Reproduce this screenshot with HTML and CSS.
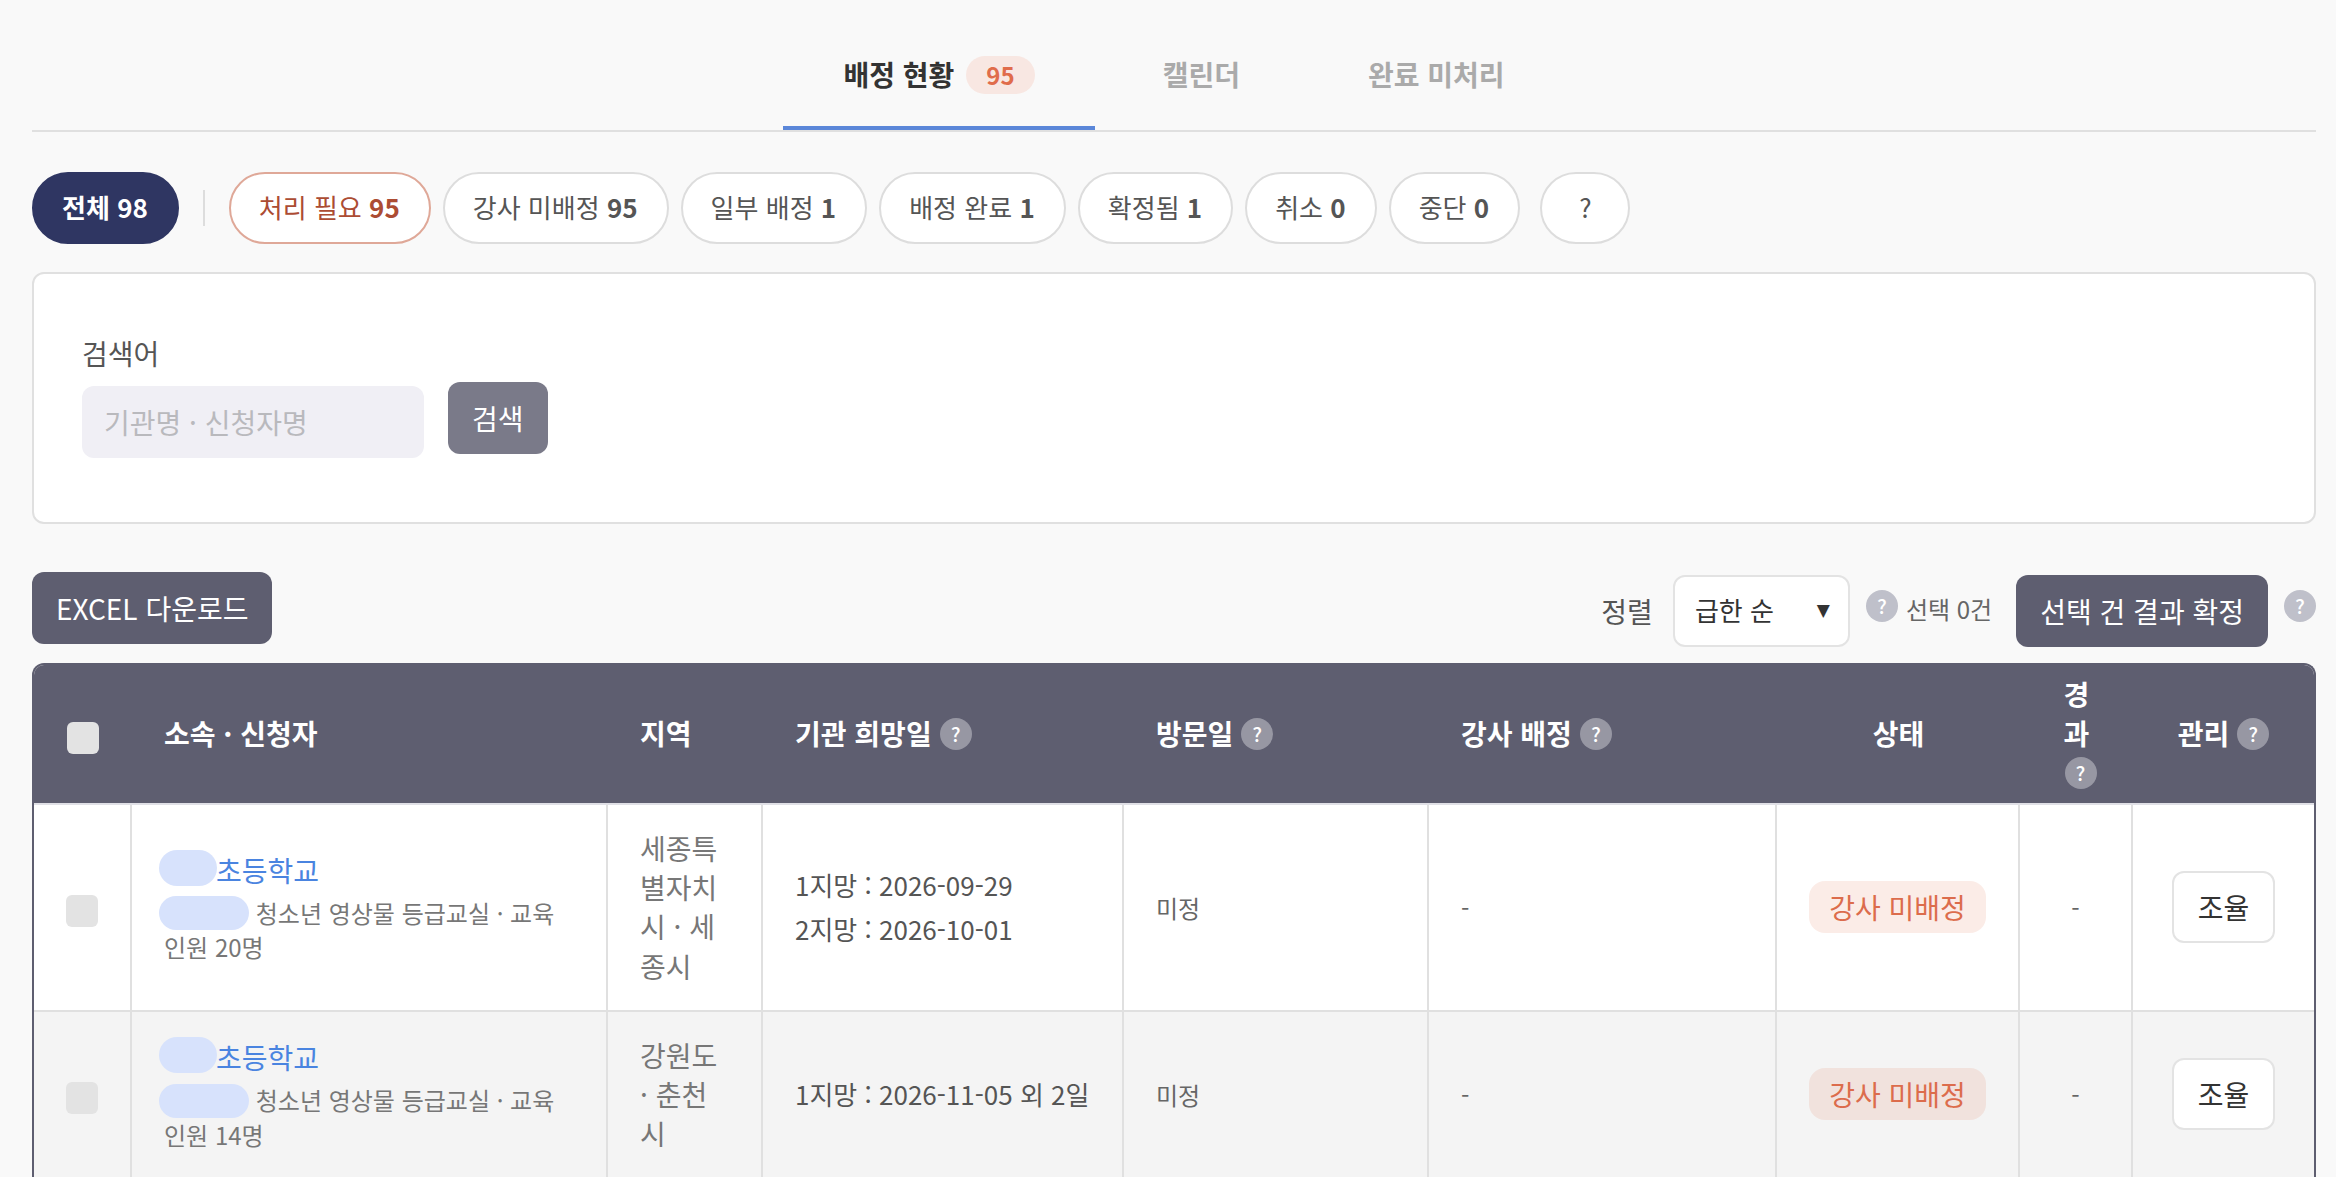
FILE: index.html
```
<!DOCTYPE html>
<html lang="ko">
<head>
  <meta charset="UTF-8">
  <meta name="viewport" content="width=device-width, initial-scale=1.0">
  <title>배정 현황</title>
  <link rel="stylesheet" href="styles.css">
</head>
<body>

  <!-- 탭 -->
  <nav class="tabs">
    <a href="#status" class="tab active">배정 현황 <span class="tab-count">95</span></a>
    <a href="#calendar" class="tab">캘린더</a>
    <a href="#unprocessed" class="tab">완료 미처리</a>
  </nav>

  <main>
    <!-- 상태 필터 -->
    <div class="chips">
      <button type="button" class="chip chip-on">전체 <b>98</b></button>
      <span class="chip-line"></span>
      <button type="button" class="chip chip-alert">처리 필요 <b>95</b></button>
      <button type="button" class="chip">강사 미배정 <b>95</b></button>
      <button type="button" class="chip">일부 배정 <b>1</b></button>
      <button type="button" class="chip">배정 완료 <b>1</b></button>
      <button type="button" class="chip">확정됨 <b>1</b></button>
      <button type="button" class="chip">취소 <b>0</b></button>
      <button type="button" class="chip">중단 <b>0</b></button>
      <button type="button" class="chip chip-help">?</button>
    </div>

    <!-- 검색 -->
    <form class="search">
      <div class="field">
        <label for="keyword">검색어</label>
        <input type="text" id="keyword" placeholder="기관명 · 신청자명">
      </div>
      <button type="submit" class="btn btn-search">검색</button>
    </form>

    <!-- 목록 상단 -->
    <div class="toolbar">
      <button type="button" class="btn">EXCEL 다운로드</button>
      <div class="toolbar-right">
        <label for="sort">정렬</label>
        <div class="select-box">
          <select id="sort">
            <option>급한 순</option>
          </select>
          <span class="arrow">▼</span>
        </div>
        <button type="button" class="help">?</button>
        <span class="selected">선택 0건</span>
        <button type="button" class="btn">선택 건 결과 확정</button>
        <button type="button" class="help">?</button>
      </div>
    </div>

    <!-- 목록 -->
    <div class="table-box">
      <table>
        <colgroup>
          <col class="col-check">
          <col>
          <col class="col-region">
          <col class="col-wish">
          <col class="col-visit">
          <col class="col-teacher">
          <col class="col-state">
          <col class="col-days">
          <col class="col-manage">
        </colgroup>
        <thead>
          <tr>
            <th class="check"><input type="checkbox" aria-label="전체 선택"></th>
            <th>소속 · 신청자</th>
            <th>지역</th>
            <th>기관 희망일<button type="button" class="help">?</button></th>
            <th>방문일<button type="button" class="help">?</button></th>
            <th>강사 배정<button type="button" class="help">?</button></th>
            <th class="center">상태</th>
            <th class="center">경과<button type="button" class="help">?</button></th>
            <th class="center">관리<button type="button" class="help">?</button></th>
          </tr>
        </thead>
        <tbody>
          <tr>
            <td class="check"><input type="checkbox" aria-label="선택"></td>
            <td>
              <a href="#detail" class="name"><span class="mask"></span>초등학교</a>
              <p class="info"><span class="mask mask-wide"></span> 청소년 영상물 등급교실 · 교육인원 20명</p>
            </td>
            <td class="region">세종특별자치시 · 세종시</td>
            <td class="wish">1지망 : 2026-09-29<br>2지망 : 2026-10-01</td>
            <td class="small">미정</td>
            <td class="small">-</td>
            <td class="center"><span class="state">강사 미배정</span></td>
            <td class="center small">-</td>
            <td class="center"><button type="button" class="btn-line">조율</button></td>
          </tr>
          <tr>
            <td class="check"><input type="checkbox" aria-label="선택"></td>
            <td>
              <a href="#detail" class="name"><span class="mask"></span>초등학교</a>
              <p class="info"><span class="mask mask-wide"></span> 청소년 영상물 등급교실 · 교육인원 14명</p>
            </td>
            <td class="region">강원도 · 춘천시</td>
            <td class="wish">1지망 : 2026-11-05 외 2일</td>
            <td class="small">미정</td>
            <td class="small">-</td>
            <td class="center"><span class="state">강사 미배정</span></td>
            <td class="center small">-</td>
            <td class="center"><button type="button" class="btn-line">조율</button></td>
          </tr>
        </tbody>
      </table>
    </div>
  </main>

</body>
</html>
```
FILE: styles.css
```
/* === 기본 === */
* { margin: 0; padding: 0; box-sizing: border-box; font-family: "Noto Sans CJK KR", "Noto Sans", sans-serif; }
body { background-color: #f9f9f9; color: #555; font-size: 28px; line-height: 1.4; padding: 20px 20px 0 32px; }
a { text-decoration: none; }
button { cursor: pointer; border: none; }

/* === 탭 === */
.tabs { display: flex; justify-content: center; gap: 8px; border-bottom: 2px solid #e0e0e0; }
.tab {
  display: flex; align-items: center; gap: 12px; height: 110px;
  padding: 4px 60px 0; border-bottom: 4px solid transparent;
  color: #aaa; font-weight: 700;
}
.tab.active { color: #333; border-bottom-color: #5b87d9; }
.tab-count {
  padding: 2px 20px; border-radius: 20px; background-color: #f8e7e2;
  color: #e06c4b; font-size: 24px; font-weight: 700;
}

/* === 상태 필터 === */
.chips { display: flex; align-items: center; gap: 12px; margin-top: 40px; }
.chip {
  height: 72px; padding: 0 29px 4px 28px; border: 2px solid #ddd; border-radius: 36px;
  background-color: #fff; color: #555; font-size: 26px;
}
.chip b { font-weight: 700; }
.chip-on { background-color: #2f3662; border-color: #2f3662; color: #fff; font-weight: 700; }
.chip-alert { border-color: #dfa898; color: #ac4c33; }
.chip-line { width: 2px; height: 36px; margin: 0 12px; background-color: #ddd; }
.chip-help { margin-left: 8px; padding: 0 37px 4px; }

/* === 검색 === */
.search {
  display: flex; align-items: flex-end; gap: 24px; margin-top: 28px;
  padding: 60px 48px 64px; border: 2px solid #e0e0e0; border-radius: 12px; background-color: #fff;
}
.field { display: flex; flex-direction: column; gap: 13px; }
.field input {
  width: 342px; height: 72px; padding: 0 22px; border: none; border-radius: 12px;
  background-color: #f0eff5; color: #333; font-size: 28px;
}
.field input::placeholder { color: #b9b9bd; }
.btn {
  height: 72px; padding: 0 24px; border-radius: 12px;
  background-color: #5e5e70; color: #fff; font-size: 28px;
}
.btn-search { background-color: #7a7a89; margin-bottom: 4px; }

/* === 목록 상단 === */
.toolbar { display: flex; justify-content: space-between; align-items: flex-start; margin-top: 48px; }
.toolbar-right { display: flex; align-items: center; padding-top: 3px; }
.toolbar-right label { margin-right: 20px; }
.select-box { position: relative; margin-right: 16px; }
.select-box select {
  appearance: none; width: 177px; height: 72px; padding: 0 20px 4px;
  border: 2px solid #e3e3e3; border-radius: 12px; background-color: #fff; color: #333; font-size: 26px;
}
.arrow {
  position: absolute; right: 20px; top: 24px; pointer-events: none;
  color: #333; font-family: "DejaVu Sans", sans-serif; font-size: 17px;
}
.selected { margin: 0 24px 4px 8px; font-size: 24px; color: #666; }
.help {
  width: 32px; height: 32px; border-radius: 50%;
  background-color: #bfc0ca; color: #fff; font-size: 20px; font-weight: 500; line-height: 32px;
}
.toolbar-right .btn { margin-right: 16px; }
.toolbar-right .help { margin-bottom: 10px; }

/* === 목록 === */
.table-box {
  margin-top: 16px; border: 2px solid #5e5e70; border-bottom: none;
  border-radius: 12px 12px 0 0; overflow: hidden;
}
table { width: 100%; table-layout: fixed; border-collapse: separate; border-spacing: 0; }
.col-check { width: 98px; }
.col-region { width: 155px; }
.col-wish { width: 361px; }
.col-visit { width: 305px; }
.col-teacher { width: 348px; }
.col-state { width: 243px; }
.col-days { width: 113px; }
.col-manage { width: 181px; }
th { padding: 10px 32px; background-color: #5e5e70; color: #fff; font-weight: 700; text-align: left; border-bottom: 2px solid #e0e0e6; }
td { padding: 24px 32px; background-color: #fff; border-right: 2px solid #e0e0e0; border-bottom: 2px solid #e0e0e0; }
td:last-child { border-right: none; }
tbody tr:nth-child(even) td { background-color: #f4f4f4; }
th .help { margin: -4px 0 4px 8px; background-color: #9797a3; vertical-align: middle; }
th.center, td.center { text-align: center; }
th.check, td.check { padding-left: 0; padding-right: 0; text-align: center; }
.check input {
  appearance: none; width: 32px; height: 32px; border-radius: 6px;
  background-color: #e3e3e3; vertical-align: middle;
}
.name { display: flex; align-items: center; color: #4a84e0; }
.info { margin-top: 6px; font-size: 24px; color: #777; }
.mask {
  display: inline-block; width: 58px; height: 36px; margin: -4px -1px 0 -5px;
  border-radius: 18px; background-color: #d7e2fc; vertical-align: middle;
}
.mask-wide { width: 90px; height: 34px; margin: -6px 0 0 -5px; }
.region { color: #777; }
.wish { font-size: 26px; line-height: 44px; }
.small { font-size: 24px; color: #666; }
.state {
  display: inline-block; padding: 6px 20px; border-radius: 16px; line-height: 40px;
  background-color: rgba(224, 96, 56, 0.12); color: #dc6c4c; white-space: nowrap;
}
.btn-line {
  height: 72px; padding: 0 24px; border: 2px solid #e3e3e3; border-radius: 12px;
  background-color: #fff; color: #333; font-size: 28px;
}
```
